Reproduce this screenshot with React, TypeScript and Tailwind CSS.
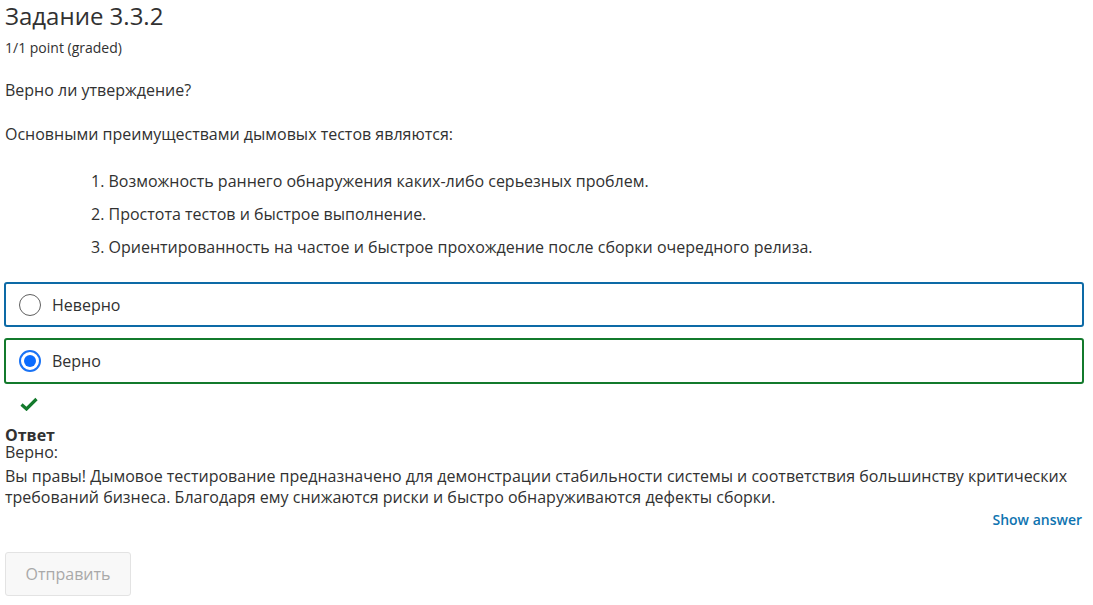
const items = [
  'Возможность раннего обнаружения каких-либо серьезных проблем.',
  'Простота тестов и быстрое выполнение.',
  'Ориентированность на частое и быстрое прохождение после сборки очередного релиза.',
]

const Radio = ({ checked }: { checked?: boolean }) =>
  checked ? (
    <span className="flex h-[22px] w-[22px] items-center justify-center rounded-full border-2 border-[#1a73f5] bg-white">
      <span className="h-[12px] w-[12px] rounded-full bg-[#0a6cff]" />
    </span>
  ) : (
    <span className="h-[22px] w-[22px] rounded-full border border-[#5f5f5f] bg-white" />
  )

const App = () => {
  return (
    <div className="min-h-screen bg-white px-[5px] font-['Open_Sans',sans-serif] text-[16px] text-[#313131]">
      <h2 className="text-[24px] leading-[32px] text-[#313131]">Задание 3.3.2</h2>
      <p className="mt-[6px] text-[14px] leading-[20px]">1/1 point (graded)</p>

      <p className="mt-[21px] leading-[22px]">Верно ли утверждение?</p>
      <p className="mt-[22px] leading-[22px]">Основными преимуществами дымовых тестов являются:</p>

      <ol className="mt-[25px] space-y-[11px] pl-[86px]">
        {items.map((text, i) => (
          <li key={i} className="leading-[22px]">
            {i + 1}. {text}
          </li>
        ))}
      </ol>

      <div className="mt-[24px] mr-[4px] -ml-[1px] space-y-[11px]">
        <label className="flex h-[45px] items-center gap-[11px] rounded-[3px] border-2 border-[#0d6aa6] px-[13px]">
          <Radio />
          <span>Неверно</span>
        </label>
        <label className="flex h-[46px] items-center gap-[11px] rounded-[3px] border-2 border-[#137a2c] px-[13px]">
          <Radio checked />
          <span>Верно</span>
        </label>
      </div>

      <div className="mt-[13px] flex h-[14px] pl-[15px]">
        <svg width="18" height="14" viewBox="0 0 18 14">
          <path d="M1.5 7.5 L6.5 12 L16.5 2" fill="none" stroke="#137a2c" strokeWidth="3.2" />
        </svg>
      </div>

      <div className="mt-[16px]">
        <p className="font-bold leading-[17px]">Ответ</p>
        <p className="leading-[17px]">Верно:</p>
        <p className="mt-[5px] leading-[21px]">
          Вы правы! Дымовое тестирование предназначено для демонстрации стабильности системы и соответствия большинству критических требований бизнеса. Благодаря ему снижаются риски и быстро обнаруживаются дефекты сборки.
        </p>
      </div>

      <div className="mt-[2px] flex justify-end pr-[6px]">
        <button className="text-[14px] leading-[20px] font-semibold text-[#0e73b0]">Show answer</button>
      </div>

      <button
        disabled
        className="mt-[22px] h-[44px] w-[126px] rounded-[3px] border border-[#e3e3e3] bg-[#f8f8f8] text-[16px] text-[#a9a9a9]"
      >
        Отправить
      </button>
    </div>
  )
}

export default App
